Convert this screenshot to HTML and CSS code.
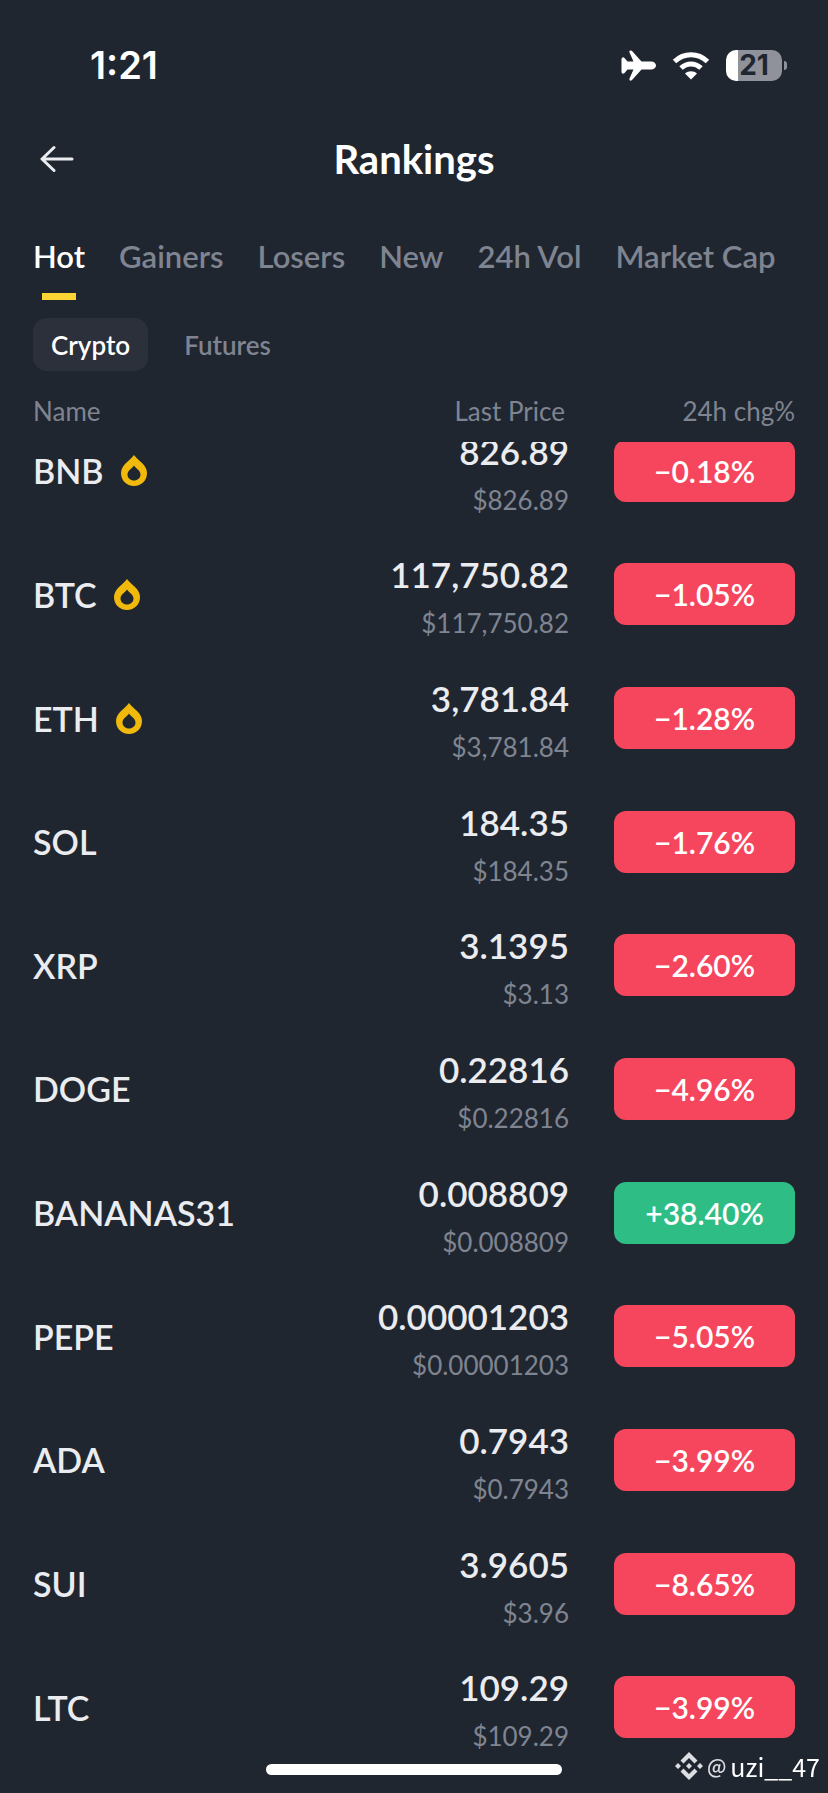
FILE: index.html
```html
<!DOCTYPE html>
<html lang="en">
<head>
  <meta charset="UTF-8" />
  <meta name="viewport" content="width=device-width, initial-scale=1.0"/>
  <title>Rankings</title>
  <link rel="stylesheet" href="styles.css">
</head>
<body>
  <svg class="sprite" aria-hidden="true">
    <symbol id="flame" viewBox="0 0 26 31">
      <path fill-rule="evenodd" d="M13 0C15 3 18 5 21 8C24 11 26 14 26 18C26 25.500 20.500 31 13 31C5.500 31 0 25.500 0 18C0 14 2 11 5 8C8 5 11 3 13 0ZM13 10.500C11.500 13 6.500 15.500 6.500 19.500C6.500 23 9.500 25.500 13 25.500C16.500 25.500 19.500 23 19.500 19.500C19.500 15.500 14.500 13 13 10.500Z"/>
    </symbol>
  </svg>

  <div class="status-bar">
    <span class="time">1:21</span>
    <div class="status-icons">
      <svg width="35" height="31" viewBox="0 0 35 31" fill="#fff" aria-label="Airplane mode">
        <path d="M9 0.500Q10.500 0 11.500 1.500L20.500 11.500H30C33 11.500 35 13.500 35 15.500C35 17.500 33 19.500 30 19.500H20.500L11.500 29.500Q10.500 31 9 30.500Q8 30 8.500 28.500L12.500 19.500H6.500L3.500 23Q2.500 24 1.500 23.500Q0.500 23 0.500 22V9Q0.500 8 1.500 7.500Q2.500 7 3.500 8L6.500 11.500H12.500L8.500 2.500Q8 1 9 0.500Z"/>
      </svg>
      <svg width="38" height="29" viewBox="0 0 38 29" aria-label="Wi-Fi">
        <path d="M2.500 10.500C12 1.500 26 1.500 35.500 10.500" fill="none" stroke="#fff" stroke-width="5"/>
        <path d="M9 17C15 11.500 23 11.500 29 17" fill="none" stroke="#fff" stroke-width="5"/>
        <path d="M19 28.500L13 22.500C16.500 19.500 21.500 19.500 25 22.500Z" fill="#fff"/>
      </svg>
      <div class="battery"><span class="battery-level">21</span></div>
    </div>
  </div>

  <header class="header">
    <button class="back" aria-label="Back">
      <svg width="34" height="28" viewBox="0 0 34 28" fill="none" stroke="#eaecef" stroke-width="3" stroke-linecap="round" stroke-linejoin="round">
        <path d="M32 14H2M14 2.500L2 14L14 25.500"/>
      </svg>
    </button>
    <h1>Rankings</h1>
  </header>

  <nav class="tabs">
    <a class="active" href="#hot">Hot</a>
    <a href="#gainers">Gainers</a>
    <a href="#losers">Losers</a>
    <a href="#new">New</a>
    <a href="#volume">24h Vol</a>
    <a href="#cap">Market Cap</a>
  </nav>

  <div class="filters">
    <button class="active">Crypto</button>
    <button>Futures</button>
  </div>

  <table class="ranking">
    <thead>
      <tr><th>Name</th><th>Last Price</th><th>24h chg%</th></tr>
    </thead>
    <tbody>
      <tr>
        <td class="name">BNB <svg class="flame"><use href="#flame"/></svg></td>
        <td class="price">826.89<small>$826.89</small></td>
        <td><span class="change">−0.18%</span></td>
      </tr>
      <tr>
        <td class="name">BTC <svg class="flame"><use href="#flame"/></svg></td>
        <td class="price">117,750.82<small>$117,750.82</small></td>
        <td><span class="change">−1.05%</span></td>
      </tr>
      <tr>
        <td class="name">ETH <svg class="flame"><use href="#flame"/></svg></td>
        <td class="price">3,781.84<small>$3,781.84</small></td>
        <td><span class="change">−1.28%</span></td>
      </tr>
      <tr>
        <td class="name">SOL</td>
        <td class="price">184.35<small>$184.35</small></td>
        <td><span class="change">−1.76%</span></td>
      </tr>
      <tr>
        <td class="name">XRP</td>
        <td class="price">3.1395<small>$3.13</small></td>
        <td><span class="change">−2.60%</span></td>
      </tr>
      <tr>
        <td class="name">DOGE</td>
        <td class="price">0.22816<small>$0.22816</small></td>
        <td><span class="change">−4.96%</span></td>
      </tr>
      <tr>
        <td class="name">BANANAS31</td>
        <td class="price">0.008809<small>$0.008809</small></td>
        <td><span class="change up">+38.40%</span></td>
      </tr>
      <tr>
        <td class="name">PEPE</td>
        <td class="price">0.00001203<small>$0.00001203</small></td>
        <td><span class="change">−5.05%</span></td>
      </tr>
      <tr>
        <td class="name">ADA</td>
        <td class="price">0.7943<small>$0.7943</small></td>
        <td><span class="change">−3.99%</span></td>
      </tr>
      <tr>
        <td class="name">SUI</td>
        <td class="price">3.9605<small>$3.96</small></td>
        <td><span class="change">−8.65%</span></td>
      </tr>
      <tr>
        <td class="name">LTC</td>
        <td class="price">109.29<small>$109.29</small></td>
        <td><span class="change">−3.99%</span></td>
      </tr>
    </tbody>
  </table>

  <div class="home-indicator"></div>
  <div class="watermark">
    <svg width="28" height="28" viewBox="0 0 28 28" fill="#dcdee1" aria-hidden="true">
      <path d="M14 0L22.500 8.500L19.500 11.500L14 6L8.500 11.500L5.500 8.500Z"/>
      <path d="M14 28L22.500 19.500L19.500 16.500L14 22L8.500 16.500L5.500 19.500Z"/>
      <path d="M3 11L6 14L3 17L0 14ZM25 11L28 14L25 17L22 14ZM14 11L17 14L14 17L11 14Z"/>
    </svg>
    <span class="at">@</span><span>uzi__47</span>
  </div>
</body>
</html>
```
FILE: styles.css
```css
:root {
  --bg: #202630;
  --text: #eaecef;
  --muted: #7f8491;
  --red: #f6465d;
  --green: #2ebd85;
  --yellow: #fcd535;
}

* {
  box-sizing: border-box;
}

body {
  margin: 0;
  min-height: 100vh;
  display: flex;
  flex-direction: column;
  padding-bottom: 24px;
  background: var(--bg);
  color: var(--text);
  font-family: Lato, sans-serif;
}

button {
  border: none;
  background: none;
  color: inherit;
  font: inherit;
  padding: 0;
  cursor: pointer;
}

.sprite {
  position: absolute;
  width: 0;
  height: 0;
}

.status-bar {
  display: flex;
  align-items: center;
  justify-content: space-between;
  height: 112px;
  padding: 18px 42px 0 90px;
  color: #fff;
}

.time {
  font: 600 38px Inter, sans-serif;
}

.status-icons {
  display: flex;
  align-items: center;
  gap: 16px;
}

.battery {
  position: relative;
  width: 56px;
  height: 31px;
  margin-right: 4px;
  border-radius: 10px;
  background: linear-gradient(90deg, #fff 12px, #8f929b 12px);
  text-align: center;
}

.battery::after {
  content: "";
  position: absolute;
  left: 58px;
  top: 11px;
  width: 3px;
  height: 9px;
  border-radius: 0 4px 4px 0;
  background: #8f929b;
}

.battery-level {
  color: var(--bg);
  font: 700 28px/31px Inter, sans-serif;
}

.header {
  display: grid;
  grid-template-columns: 34px 1fr 34px;
  align-items: center;
  height: 94px;
  padding: 0 40px;
}

.back {
  display: flex;
}

h1 {
  margin: 0;
  color: #fff;
  font-size: 40px;
  font-weight: 700;
  line-height: 44px;
  text-align: center;
}

.tabs {
  display: flex;
  gap: 34px;
  height: 95px;
  padding: 32px 33px 0;
  white-space: nowrap;
}

.tabs a {
  position: relative;
  height: 62px;
  color: var(--muted);
  font-size: 31px;
  font-weight: 600;
  line-height: 36px;
  text-decoration: none;
}

.tabs .active {
  color: #fff;
}

.tabs .active::after {
  content: "";
  position: absolute;
  left: calc(50% - 17px);
  bottom: 0;
  width: 34px;
  height: 7px;
  background: var(--yellow);
}

.filters {
  display: flex;
  gap: 18px;
  padding: 17px 33px 0;
}

.filters button {
  height: 53px;
  padding: 0 18px;
  border-radius: 14px;
  color: var(--muted);
  font-size: 26px;
  font-weight: 600;
}

.filters .active {
  background: #2b303b;
  color: #fff;
}

.ranking {
  flex: 1;
  display: flex;
  flex-direction: column;
}

.ranking tr {
  display: grid;
  grid-template-columns: 1fr 1fr 181px;
  column-gap: 45px;
  align-items: center;
  padding: 0 33px;
}

.ranking th,
.ranking td {
  padding: 0;
}

/* covers the top of the scrolled list */
.ranking thead {
  position: relative;
  z-index: 1;
  display: block;
  padding: 24px 0 15px;
  background: var(--bg);
}

.ranking th {
  color: var(--muted);
  font-size: 26px;
  font-weight: 400;
  line-height: 32px;
  text-align: right;
}

.ranking th:first-child {
  text-align: left;
}

.ranking th:nth-child(2) {
  padding-right: 4px;
}

.ranking tbody {
  flex: 1;
  display: grid;
  grid-auto-rows: 1fr;
  margin-top: -33px;
}

.name {
  display: flex;
  align-items: center;
  gap: 17px;
  font-size: 34px;
  font-weight: 600;
}

.flame {
  width: 26px;
  height: 31px;
  fill: #f0b90b;
}

.ranking .price {
  padding-top: 10px;
  font-size: 35px;
  font-weight: 600;
  line-height: 48px;
  text-align: right;
}

.price small {
  display: block;
  color: var(--muted);
  font-size: 26px;
  font-weight: 400;
  line-height: 50px;
}

.change {
  display: block;
  border-radius: 12px;
  background: var(--red);
  color: #fff;
  font-size: 30px;
  font-weight: 600;
  line-height: 62px;
  text-align: center;
}

.change.up {
  background: var(--green);
}

.home-indicator {
  position: fixed;
  z-index: 2;
  left: 50%;
  bottom: 18px;
  width: 296px;
  height: 11px;
  border-radius: 6px;
  background: #fff;
  transform: translateX(-50%);
}

.watermark {
  position: fixed;
  z-index: 2;
  right: 8px;
  bottom: 9px;
  display: flex;
  align-items: center;
  gap: 4px;
  color: #fff;
  font: 400 25px/36px "Noto Sans CJK SC", "Noto Sans", sans-serif;
}

.at {
  color: #dcdee1;
  font-size: 20px;
  font-weight: 500;
}
```
